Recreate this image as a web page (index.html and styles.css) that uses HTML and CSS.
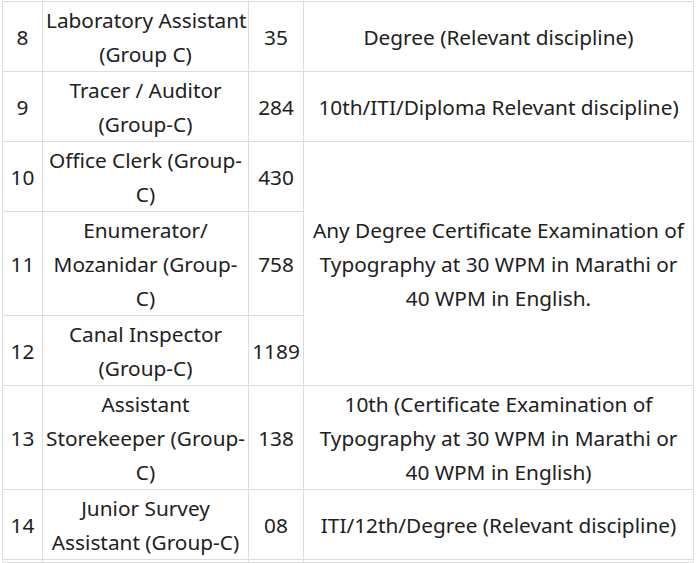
FILE: index.html
```html
<!DOCTYPE html>
<html>
<head>
<meta charset="utf-8">
<link rel="stylesheet" href="styles.css">
</head>
<body>
<table class="posts">
  <colgroup>
    <col class="c-no">
    <col class="c-post">
    <col class="c-vac">
    <col class="c-qual">
  </colgroup>
  <tbody>
    <tr>
      <td>8</td>
      <td><span class="nw">Laboratory Assistant</span> (Group C)</td>
      <td>35</td>
      <td>Degree (Relevant discipline)</td>
    </tr>
    <tr>
      <td>9</td>
      <td>Tracer / Auditor (Group-C)</td>
      <td>284</td>
      <td>10th/ITI/Diploma Relevant discipline)</td>
    </tr>
    <tr>
      <td>10</td>
      <td>Office Clerk (Group-C)</td>
      <td>430</td>
      <td rowspan="3">Any Degree Certificate Examination of Typography at 30 WPM in Marathi or 40 WPM in English.</td>
    </tr>
    <tr>
      <td>11</td>
      <td>Enumerator/ Mozanidar (Group-C)</td>
      <td>758</td>
    </tr>
    <tr>
      <td>12</td>
      <td>Canal Inspector (Group-C)</td>
      <td>1189</td>
    </tr>
    <tr>
      <td>13</td>
      <td>Assistant Storekeeper (Group-C)</td>
      <td>138</td>
      <td>10th (Certificate Examination of Typography at 30 WPM in Marathi or 40 WPM in English)</td>
    </tr>
    <tr>
      <td>14</td>
      <td>Junior Survey Assistant (Group-C)</td>
      <td>08</td>
      <td>ITI/12th/Degree (Relevant discipline)</td>
    </tr>
    <tr class="next">
      <td></td>
      <td></td>
      <td></td>
      <td></td>
    </tr>
  </tbody>
</table>
</body>
</html>
```
FILE: styles.css
```css
html, body {
  margin: 0;
  padding: 0;
  background: #ffffff;
}

.posts {
  margin: 1px 0 0 2px;
  border-collapse: collapse;
  table-layout: fixed;
  width: 691px;
  font-family: "Noto Sans", "Open Sans", sans-serif;
  font-size: 20.8px;
  line-height: 34px;
  color: #212121;
}

.c-no { width: 40px; }
.c-post { width: 206px; }
.c-vac { width: 55px; }
.c-qual { width: 390px; }

.posts td {
  border: 1px solid #dddddd;
  padding: 1px 3px 0;
  text-align: center;
  vertical-align: middle;
}

.nw {
  white-space: nowrap;
}

.posts .next td {
  height: 2px;
  padding: 0;
  line-height: 0;
}
```
